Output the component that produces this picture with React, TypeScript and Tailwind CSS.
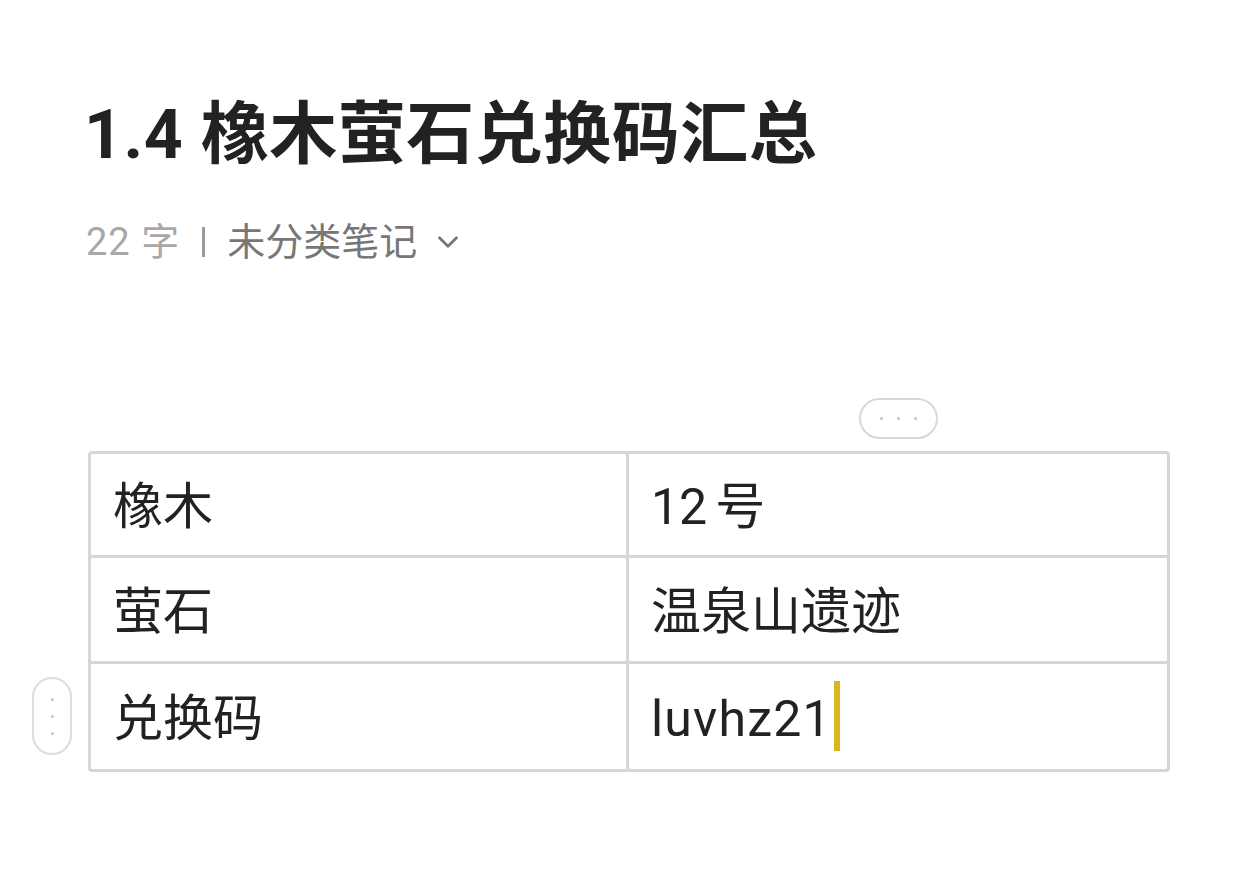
import { ChevronDown } from 'lucide-react';

const rows = [
  { a: '橡木', b: '12', unit: '号', h: 'h-[104px]' },
  { a: '萤石', b: '温泉山遗迹', h: 'h-[106px]' },
  { a: '兑换码', b: 'luvhz21', caret: true, h: 'h-[105px]' },
];

const Dots = ({ vertical }: { vertical?: boolean }) => (
  <div className={`flex items-center justify-center gap-[14px] ${vertical ? 'flex-col' : ''}`}>
    <span className="h-[3px] w-[3px] rounded-full bg-[#c4c4c4]" />
    <span className="h-[3px] w-[3px] rounded-full bg-[#c4c4c4]" />
    <span className="h-[3px] w-[3px] rounded-full bg-[#c4c4c4]" />
  </div>
);

export default function App() {
  return (
    <div
      className="min-h-[881px] w-[1260px] bg-white text-[#222]"
      style={{ fontFamily: 'Roboto, "Noto Sans CJK SC", sans-serif' }}
    >
      <div className="px-[84px] pt-[92px]">
        <h1 className="text-[68px] font-bold leading-[86px] tracking-[0.5px]">1.4 橡木萤石兑换码汇总</h1>
        <div className="mt-[40px] flex items-center text-[38px] leading-[48px]">
          <span className="pl-[2px] text-[#a8a8a8] tracking-[1px]">22 字</span>
          <span className="ml-[22px] mr-[22px] h-[30px] w-[3px] bg-[#999]" />
          <span className="text-[#777]">未分类笔记</span>
          <ChevronDown className="ml-[14px] text-[#777]" size={34} strokeWidth={2} />
        </div>
      </div>

      <div className="mt-[132px] flex justify-end pr-[322px]">
        <div className="flex h-[41px] w-[79px] items-center justify-center rounded-full border-2 border-[#d8d8d8]">
          <Dots />
        </div>
      </div>

      <div className="relative mx-[88px] mt-[12px] w-[1082px]">
        <div className="absolute left-[-56px] top-[226px] flex h-[78px] w-[40px] items-center justify-center rounded-full border-2 border-[#dcdcdc]">
          <Dots vertical />
        </div>
        <div className="flex flex-col rounded-[4px] border-[3px] border-[#d6d6d6]">
          {rows.map((r, i) => (
            <div key={r.a} className={`flex ${r.h} ${i < 2 ? 'border-b-[3px] border-[#d6d6d6]' : ''}`}>
              <div className="flex w-[538px] items-center border-r-[3px] border-[#d6d6d6] pl-[22px] pt-[4px] text-[50px] leading-none">
                {r.a}
              </div>
              <div className="flex flex-1 items-center pl-[22px] pt-[4px] text-[50px] leading-none">
                <span className={r.caret ? 'tracking-[1.2px]' : ''}>{r.b}</span>
                {r.unit && <span className="ml-[8px]">{r.unit}</span>}
                {r.caret && <span className="mb-[6px] ml-[2px] inline-block h-[70px] w-[6px] bg-[#d9b520]" />}
              </div>
            </div>
          ))}
        </div>
      </div>
    </div>
  );
}
